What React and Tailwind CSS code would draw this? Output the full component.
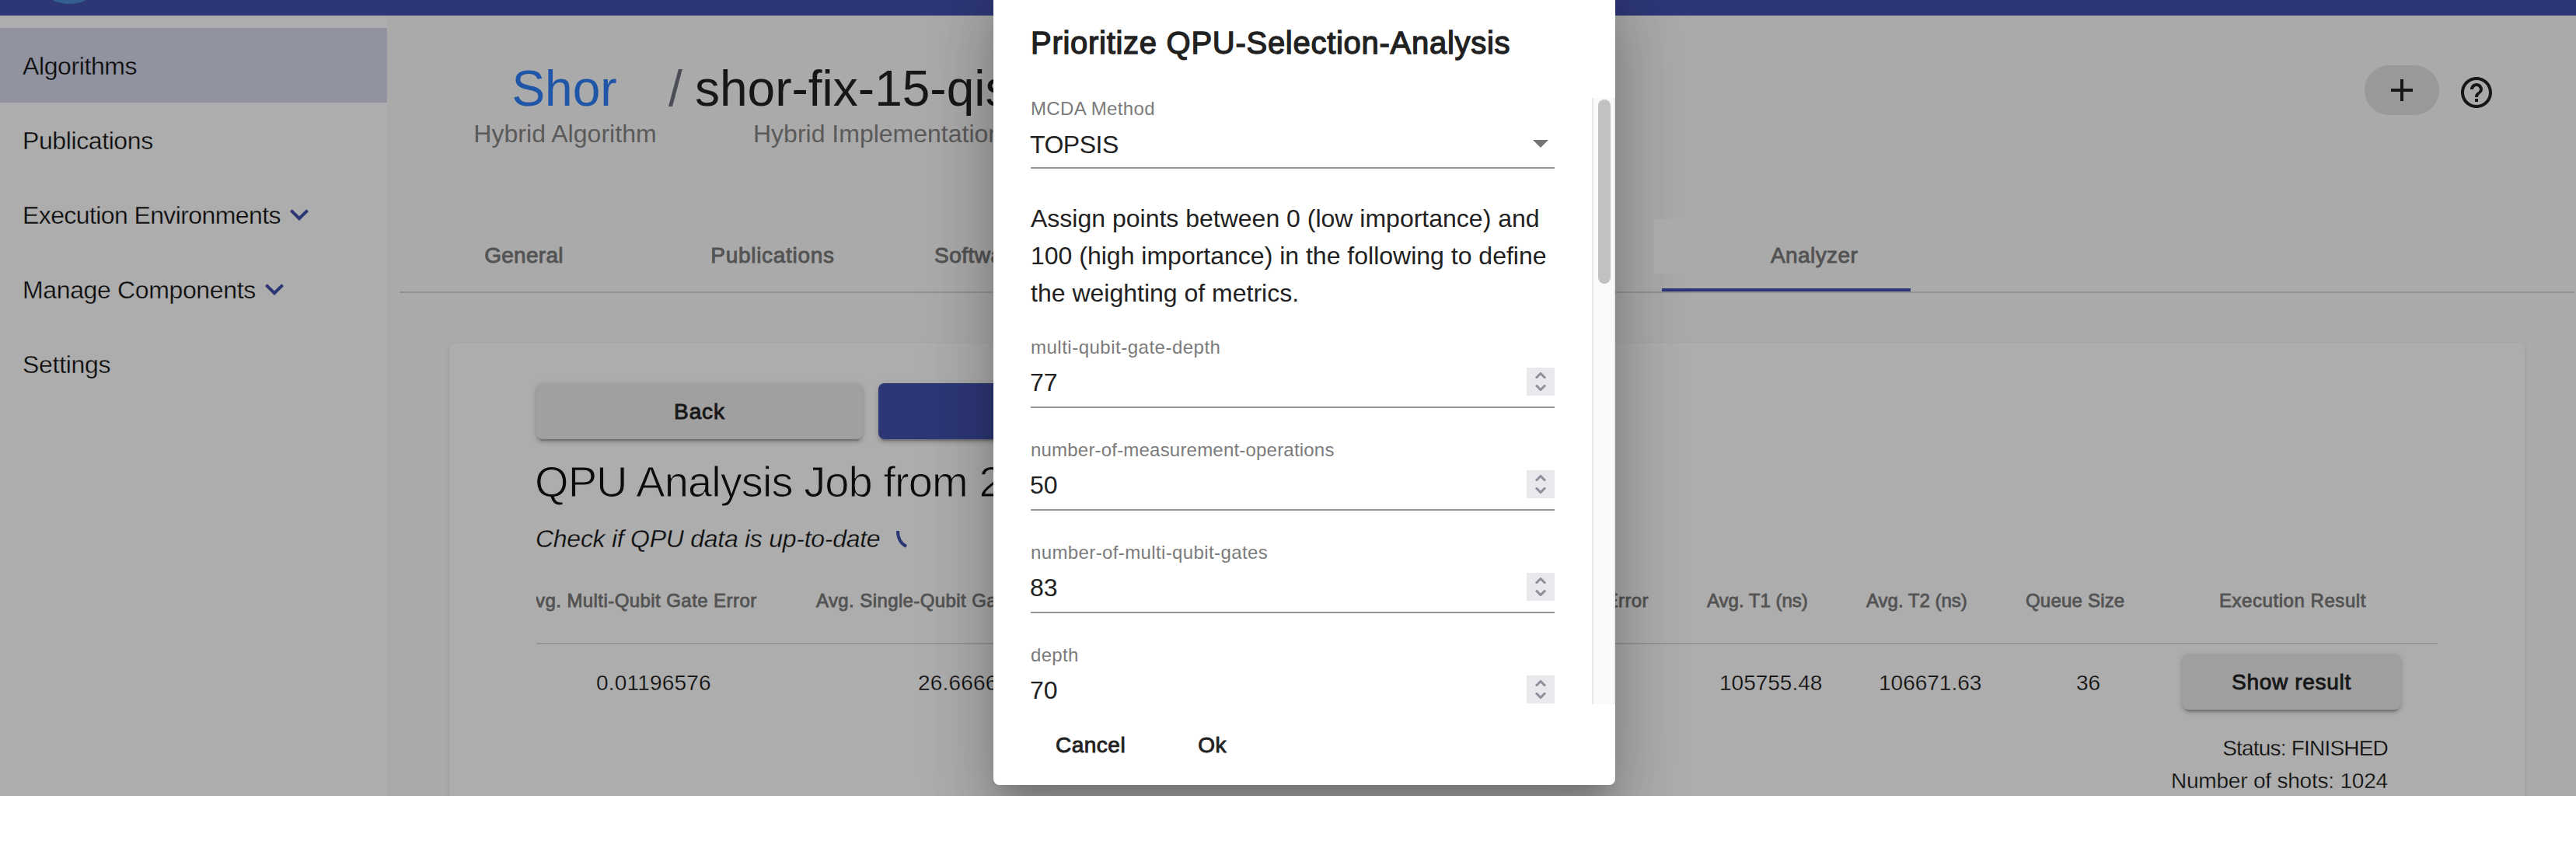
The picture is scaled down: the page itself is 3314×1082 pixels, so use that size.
import React from "react";
import { MdAdd, MdExpandMore, MdHelpOutline } from "react-icons/md";

const NAV = [
  { label: "Algorithms", tracking: "tracking-[-0.4px]", active: true },
  { label: "Publications", tracking: "tracking-[-0.4px]" },
  { label: "Execution Environments", tracking: "tracking-[-0.6px]", expandable: true },
  { label: "Manage Components", tracking: "tracking-[-0.36px]", expandable: true },
  { label: "Settings", tracking: "tracking-[-0.3px]" },
];

const HEADERS = [
  { label: "Avg. Multi-Qubit Gate Error", cell: "-ml-[17px] w-[377px] tracking-[0.43px]" },
  { label: "Avg. Single-Qubit Gate Error", cell: "w-[740px] tracking-[0.4px]" },
  { label: "Avg. Readout Error", cell: "w-[331px] text-right tracking-[0.4px]" },
  { label: "Avg. T1 (ns)", cell: "w-[280px] pl-[75px]" },
  { label: "Avg. T2 (ns)", cell: "w-[205px]" },
  { label: "Queue Size", cell: "w-[249px] tracking-[0.2px]" },
  { label: "Execution Result", cell: "tracking-[0.55px]" },
];

const VALUES = [
  { label: "0.01196576", cell: "w-[491px] pl-[77px] tracking-[0.2px]" },
  { label: "26.66666667", cell: "w-[1031px] tracking-[0.2px]" },
  { label: "105755.48", cell: "w-[205px]" },
  { label: "106671.63", cell: "w-[254px]" },
  { label: "36", cell: "w-[137px]" },
];

const METRICS = [
  { name: "multi-qubit-gate-depth", value: 77, tracking: "tracking-[0.5px]" },
  { name: "number-of-measurement-operations", value: 50, tracking: "tracking-[0.2px]" },
  { name: "number-of-multi-qubit-gates", value: 83, tracking: "tracking-[0.38px]" },
  { name: "depth", value: 70, tracking: "tracking-[0.3px]" },
];

const raised =
  "rounded-lg shadow-[0_6px_2px_-4px_rgba(0,0,0,0.2),0_4px_4px_0_rgba(0,0,0,0.14),0_2px_10px_0_rgba(0,0,0,0.12)]";
const medium = "[-webkit-text-stroke:0.9px_currentColor]";
const light = "text-[#0c0c0c] [-webkit-text-stroke:0.35px_#adadad]";

function Sidebar() {
  return (
    <nav className="w-[498px] shrink-0 bg-[#adadad] pt-4">
      {NAV.map((item) => (
        <div
          key={item.label}
          className={`flex h-24 items-center pl-[29px] text-[32px] text-[#0c0c0c] ${
            item.active
              ? "bg-[#9293a1] [-webkit-text-stroke:0.35px_#9293a1]"
              : "[-webkit-text-stroke:0.35px_#adadad]"
          }`}
        >
          <span className={`pt-0.5 ${item.tracking}`}>{item.label}</span>
          {item.expandable && <MdExpandMore className="size-12 text-[#2d3776] [stroke-width:0]" />}
        </div>
      ))}
    </nav>
  );
}

function Header() {
  return (
    <div className="flex h-[262px] justify-between pt-[63px] whitespace-nowrap">
      <div className="-mt-[7px] flex">
        <div className="ml-[110px] w-[238px] text-center">
          <div className="-ml-0.5 text-[64px] leading-[76px] text-[#2056a8]">Shor</div>
          <div className="text-[32px] leading-[40px] tracking-[0.05px] text-[#5a5a5a]">Hybrid Algorithm</div>
        </div>
        <div className="ml-3.5 w-[36px] text-[64px] leading-[76px] text-[#4b4e55]">/</div>
        <div className="w-[460px]">
          <div className="-ml-0.5 text-[64px] leading-[76px]">shor-fix-15-qiskit</div>
          <div className="pl-[73px] text-[32px] leading-[40px] text-[#5a5a5a]">
            Hybrid Implementation
          </div>
        </div>
      </div>
      <div className="flex pr-[104px]">
        <div className="mt-px flex h-16 w-24 items-center justify-center rounded-full bg-[#999999]">
          <MdAdd className="size-12" />
        </div>
        <MdHelpOutline className="mt-3 ml-6 size-12" />
      </div>
    </div>
  );
}

function Tabs() {
  const tab = "flex items-center";
  return (
    <div
      className={`mr-0.5 ml-4 flex h-[95px] border-b-2 border-[#929292] text-[28px] whitespace-nowrap text-[#535353] ${medium}`}
    >
      <div className={`${tab} w-80 justify-center tracking-[0.3px]`}>General</div>
      <div className={`${tab} w-80 justify-center tracking-[0.7px]`}>Publications</div>
      <div className={`${tab} w-[984px] pl-12 tracking-[0.5px]`}>Software Platforms</div>
      <div className={`${tab} w-80 border-b-4 border-[#2d3776] pt-1 pl-[140px] tracking-[0.4px]`}>
        Analyzer
      </div>
    </div>
  );
}

function ResultTable() {
  return (
    <div className="mt-[31px] w-[2446px] overflow-hidden whitespace-nowrap">
      <div className="flex h-[85px] border-b-2 border-[#959595] text-[24px] leading-[32px] text-[#535353] [-webkit-text-stroke:0.8px_currentColor]">
        {HEADERS.map((h) => (
          <div key={h.label} className={`shrink-0 pt-[13px] ${h.cell}`}>
            {h.label}
          </div>
        ))}
      </div>
      <div className="flex text-[28px]">
        {VALUES.map((v) => (
          <div key={v.label} className={`shrink-0 pt-[30px] leading-[40px] ${light} ${v.cell}`}>
            {v.label}
          </div>
        ))}
        <div className="w-[280px] pt-3">
          <div className={`flex h-[72px] items-center justify-center bg-[#a0a0a0] pt-0.5 tracking-[0.7px] ${raised} ${medium}`}>
            Show result
          </div>
          <div className={`flex flex-col items-end pt-[29px] pr-4 leading-[42px] ${light}`}>
            <div className="tracking-[-0.8px]">Status: FINISHED</div>
            <div className="tracking-[-0.2px]">Number of shots: 1024</div>
          </div>
        </div>
      </div>
    </div>
  );
}

function AnalysisCard() {
  return (
    <div className="mt-16 mr-[66px] ml-20 h-[700px] rounded-lg bg-[#adadad] pt-[52px] pl-28 shadow-[0_4px_2px_-2px_rgba(0,0,0,0.1),0_2px_2px_0_rgba(0,0,0,0.07),0_2px_6px_0_rgba(0,0,0,0.08)]">
      <div className="flex gap-5">
        <div className={`flex h-[72px] w-[420px] items-center justify-center bg-[#a0a0a0] pt-0.5 text-[28px] tracking-[0.9px] ${raised} ${medium}`}>
          Back
        </div>
        <div className={`h-[72px] w-[420px] bg-[#2d3776] ${raised}`} />
      </div>
      <h1 className="mt-[21px] -ml-0.5 text-[56px] leading-[67px] tracking-[-0.9px] whitespace-nowrap text-[#0c0c0c] [-webkit-text-stroke:1px_#adadad]">
        QPU Analysis Job from 2021
      </h1>
      <div className="mt-5 flex h-10 items-center">
        <span className={`-ml-px text-[32px] tracking-[-0.27px] italic ${light}`}>
          Check if QPU data is up-to-date
        </span>
        <svg className="ml-[18px] h-[26px] w-[20px]" viewBox="0 0 20 26" fill="none">
          <path d="M5 3 C5 12 8 19 16 23" stroke="#2d3776" strokeWidth="4" />
        </svg>
      </div>
      <ResultTable />
    </div>
  );
}

function MetricField({ name, value, tracking }) {
  return (
    <div className="h-[132px] shrink-0">
      <div className={`pt-px pb-[9px] text-[24px] leading-[18px] text-[#7b7b7b] ${tracking}`}>{name}</div>
      <div className="flex h-[58px] items-start justify-between pt-1.5">
        <span className="-ml-px pt-[3px] text-[32px] leading-[36px]">{value}</span>
        <span className="mt-0.5 flex size-9 flex-col items-center justify-center gap-2 bg-[#e9e8ed]">
          <svg className="h-2 w-4" viewBox="0 0 16 8" fill="none" stroke="#8f8f9b" strokeWidth="3">
            <path d="M2 7.5 8 1.5 14 7.5" />
          </svg>
          <svg className="h-2 w-4" viewBox="0 0 16 8" fill="none" stroke="#8f8f9b" strokeWidth="3">
            <path d="M2 0.5 8 6.5 14 0.5" />
          </svg>
        </span>
      </div>
      <div className="h-0.5 bg-[#949494]" />
    </div>
  );
}

function Dialog() {
  return (
    <div className="absolute top-[-20px] left-[1278px] flex h-[1030px] w-[800px] flex-col rounded-lg bg-white pt-5 whitespace-nowrap text-[#212121] shadow-[0_22px_30px_-14px_rgba(0,0,0,0.2),0_48px_76px_6px_rgba(0,0,0,0.14),0_18px_92px_16px_rgba(0,0,0,0.12)]">
      <h2 className="h-[126px] shrink-0 pt-[23px] pl-12 text-[40px] leading-[64px] tracking-[0.72px] [-webkit-text-stroke:1.3px_currentColor]">
        Prioritize QPU-Selection-Analysis
      </h2>
      <div className="flex h-[780px] shrink-0 overflow-hidden">
        <div className="flex w-[722px] flex-col pl-12">
          <div className="shrink-0 text-[24px] leading-[28px] tracking-[0.35px] text-[#7b7b7b]">MCDA Method</div>
          <div className="flex h-[61px] shrink-0 items-center justify-between pr-2">
            <span className="-ml-px pt-0.5 text-[32px] leading-[36px] tracking-[-0.5px]">TOPSIS</span>
            <svg className="h-2.5 w-5" viewBox="0 0 20 10" fill="#757575">
              <path d="M0 0H20L10 10z" />
            </svg>
          </div>
          <div className="h-0.5 shrink-0 bg-[#949494]" />
          <p className="mt-10 mb-9 shrink-0 text-[32px] leading-[48px]">
            Assign points between 0 (low importance) and
            <br />
            100 (high importance) in the following to define
            <br />
            the weighting of metrics.
          </p>
          {METRICS.map((m) => (
            <MetricField key={m.name} {...m} />
          ))}
        </div>
        <div className="ml-12 w-[30px] border-r-2 border-l-2 border-[#ebebeb] bg-[#fafafa] pt-0.5 pl-1.5">
          <div className="h-[237px] w-4 rounded-full bg-[#c1c1c1]" />
        </div>
      </div>
      <div className={`flex gap-[93px] pt-[33px] pl-20 text-[28px] leading-[40px] tracking-[0.5px] ${medium}`}>
        <span>Cancel</span>
        <span>Ok</span>
      </div>
    </div>
  );
}

export default function App() {
  return (
    <div className="h-[1082px] w-[3314px] bg-white font-['Liberation_Sans',Arial,sans-serif] text-[#171717]">
      <div className="relative flex h-[1024px] flex-col overflow-hidden bg-[#aaaaaa]">
        <header className="h-5 shrink-0 overflow-hidden bg-[#2d3776] pl-[39px]">
          <div className="-mt-[95px] size-[100px] rounded-full bg-[#33608f]" />
        </header>
        <div className="flex min-h-0 flex-1">
          <Sidebar />
          <main className="w-[2816px] shrink-0">
            <Header />
            <Tabs />
            <AnalysisCard />
          </main>
        </div>
        <Dialog />
        <div className="absolute top-[282px] left-[2128px] h-[70px] w-[90px] bg-[#aaaaaa]" />
      </div>
    </div>
  );
}
